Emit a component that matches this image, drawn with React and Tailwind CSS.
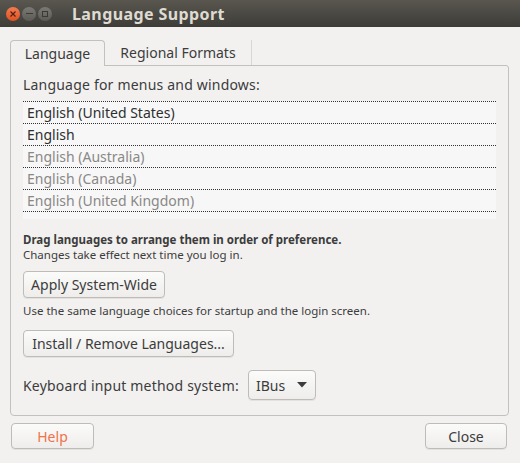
import React from "react";

const font = { fontFamily: '"Noto Sans", "Open Sans", sans-serif' };

function Btn({ children, className = "" }) {
  return (
    <div
      className={
        "flex items-center justify-center rounded-[4px] border border-[#bfbcb7] bg-gradient-to-b from-[#fbfbfa] to-[#eeedeb] shadow-[0_1px_0_rgba(0,0,0,0.06)] text-[14px] text-[#3c3c3c] " +
        className
      }
    >
      {children}
    </div>
  );
}

export default function App() {
  const rows = [
    { t: "English (United States)", c: "text-[#2f2f2f]" },
    { t: "English", c: "text-[#2f2f2f]" },
    { t: "English (Australia)", c: "text-[#8a8886]" },
    { t: "English (Canada)", c: "text-[#8a8886]" },
    { t: "English (United Kingdom)", c: "text-[#8a8886]" },
    { t: "", c: "" },
  ];
  return (
    <div className="w-[520px] h-[463px] bg-[#f2f1f0] flex flex-col overflow-hidden" style={font}>
      {/* Title bar */}
      <div className="h-[27px] flex items-center bg-gradient-to-b from-[#59574f] to-[#3d3c38] shrink-0">
        <div className="flex items-center gap-[2px] pl-[6px]">
          <div className="w-[14px] h-[14px] rounded-full bg-gradient-to-b from-[#f37b4f] to-[#e0501f] flex items-center justify-center">
            <svg width="6" height="6" viewBox="0 0 6 6">
              <path d="M0.5 0.5L5.5 5.5M5.5 0.5L0.5 5.5" stroke="#4a2010" strokeWidth="1.1" />
            </svg>
          </div>
          <div className="w-[14px] h-[14px] rounded-full bg-gradient-to-b from-[#7c7a74] to-[#5b5a55] flex items-center justify-center">
            <div className="w-[7px] h-[1px] bg-[#3a3935]" />
          </div>
          <div className="w-[14px] h-[14px] rounded-full bg-gradient-to-b from-[#7c7a74] to-[#5b5a55] flex items-center justify-center">
            <div className="w-[6px] h-[6px] border border-[#3a3935]" />
          </div>
        </div>
        <div className="ml-[20px] text-[16px] tracking-[0.4px] font-bold text-[#dfdbd2] leading-none">Language Support</div>
      </div>

      {/* Tabs */}
      <div className="flex pl-[10px] pr-[12px] mt-[13px] h-[25px] shrink-0">
        <div className="w-[95px] h-[26px] border border-b-0 border-[#c4c1bc] rounded-t-[4px] bg-[#f2f1f0] flex items-center justify-center text-[14px] text-[#3c3c3c] relative z-10">
          Language
        </div>
        <div className="w-[147px] h-[25px] border-r border-[#dad7d2] flex items-center justify-center text-[14px] text-[#3c3c3c]">
          Regional Formats
        </div>
        <div className="flex-1" />
      </div>

      {/* Panel */}
      <div className="mx-[10px] mr-[11px] h-[351px] border border-[#c4c1bc] rounded-b-[4px] rounded-tr-[3px] flex flex-col px-[12px] shrink-0">
        <div className="mt-[10px] text-[14px] tracking-[0.2px] text-[#3c3c3c] leading-[18px]">Language for menus and windows:</div>
        <div className="mt-[7px] h-[118px] w-[473px] bg-[#f7f7f7] overflow-hidden">
          {rows.map((r, i) => (
            <div
              key={i}
              className={"h-[22px] border-t border-dotted border-[#333] pl-[4px] flex items-center text-[14px] " + r.c}
            >
              {r.t}
            </div>
          ))}
        </div>
        <div className="mt-[13px] text-[11.5px] font-bold text-[#3c3c3c] leading-[15px]">
          Drag languages to arrange them in order of preference.
        </div>
        <div className="text-[11.5px] text-[#3c3c3c] leading-[15px]">Changes take effect next time you log in.</div>
        <Btn className="mt-[9px] w-[142px] h-[27px]">Apply System-Wide</Btn>
        <div className="mt-[5px] text-[11.5px] text-[#3c3c3c] leading-[15px]">
          Use the same language choices for startup and the login screen.
        </div>
        <Btn className="mt-[12px] w-[211px] h-[27px]">Install / Remove Languages...</Btn>
        <div className="mt-[13px] flex items-center">
          <div className="text-[14px] tracking-[0.2px] text-[#3c3c3c]">Keyboard input method system:</div>
          <Btn className="ml-[9px] w-[68px] h-[30px] !justify-start pl-[7px]">
            <span className="text-[#3c3c3c]">IBus</span>
            <svg className="ml-[12px]" width="10" height="6" viewBox="0 0 10 6">
              <path d="M0 0H10L5 5.5Z" fill="#3c3c3c" />
            </svg>
          </Btn>
        </div>
      </div>

      {/* Bottom buttons */}
      <div className="flex justify-between pl-[11px] pr-[13px] mt-[7px]">
        <Btn className="w-[83px] h-[26px] !text-[#f0724a]">Help</Btn>
        <Btn className="w-[82px] h-[26px]">Close</Btn>
      </div>
    </div>
  );
}
